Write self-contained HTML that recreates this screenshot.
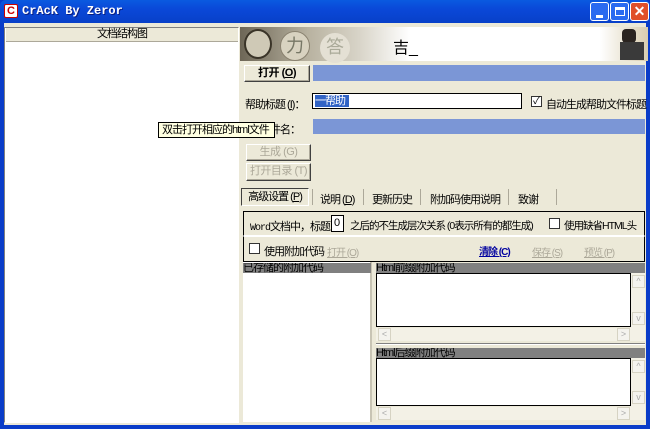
<!DOCTYPE html>
<html><head><meta charset="utf-8"><style>
*{margin:0;padding:0;box-sizing:border-box}
body{width:650px;height:429px;overflow:hidden;background:#0a3cc8;font-family:"Liberation Sans","WenQuanYi Zen Hei","Noto Sans CJK SC",sans-serif;font-size:11px;color:#000;position:relative}
.a{position:absolute;white-space:nowrap}
.t{letter-spacing:-1px}
.btn{position:absolute;background:#ece9d8;border:1px solid;border-color:#fff #404040 #404040 #fff;box-shadow:inset -1px -1px #aca899;text-align:center;line-height:15px;white-space:nowrap;letter-spacing:-0.5px}
.sunk{border:1px solid;border-color:#808080 #fff #fff #808080}
.hdr{position:absolute;background:#808080;color:#000;font-size:11px;line-height:10px;height:10px;white-space:nowrap;overflow:hidden;letter-spacing:-1px}
.cb{position:absolute;width:11px;height:11px;border:1px solid #1c5180;background:#fff}
.sb{position:absolute;background:#f3f1e6}
.arr{position:absolute;width:13px;height:13px;background:#f4f3ee;border:1px solid #d6d3c3;font-size:9px;color:#aaa;text-align:center;line-height:11px}
</style></head><body>
<div class="a" style="left:0;top:0;width:650px;height:23px;background:linear-gradient(#0a5ae0,#0a48d8 40%,#0840c8);border-radius:6px 6px 0 0"></div>
<div class="a" style="left:4px;top:4px;width:14px;height:14px;background:#fff;border:1px solid #c00;border-radius:2px;color:#c00;font-weight:bold;font-size:11px;line-height:12px;text-align:center">C</div>
<div class="a" style="left:22px;top:4px;color:#fff;font-family:'Liberation Mono',monospace;font-weight:bold;font-size:12px;text-shadow:1px 1px #0a1e80">CrAcK By Zeror</div>
<div class="a" style="left:590px;top:2px;width:19px;height:19px;background:#2a6af0;border:1px solid #fff;border-radius:3px"><div class="a" style="left:5px;top:12px;width:7px;height:3px;background:#fff"></div></div>
<div class="a" style="left:610px;top:2px;width:19px;height:19px;background:#2a6af0;border:1px solid #fff;border-radius:3px"><div class="a" style="left:4px;top:4px;width:10px;height:9px;border:1px solid #fff;border-top-width:3px"></div></div>
<div class="a" style="left:630px;top:2px;width:19px;height:19px;background:#e0502a;border:1px solid #fff;border-radius:3px;color:#fff;font-weight:bold;font-size:14px;line-height:16px;text-align:center">✕</div>
<div class="a" style="left:4px;top:23px;width:642px;height:402px;background:#ece9d8"></div>

<div class="a sunk" style="left:4px;top:27px;width:235px;height:396px;background:#fff"></div>
<div class="a t" style="left:6px;top:28px;width:232px;height:14px;background:#ece9d8;border-bottom:1px solid #aca899;text-align:center;line-height:13px">文档结构图</div>

<div class="a" style="left:240px;top:27px;width:408px;height:34px;background:#fff"></div>
<div class="a" style="left:240px;top:27px;width:170px;height:34px;background:linear-gradient(90deg,#6d6656,#b8b2a0 40%,#d8d4c8 70%,#fff)"></div>
<div class="a" style="left:244px;top:29px;width:28px;height:30px;border-radius:50%;background:#cfc9b6;border:2px solid #3a3428"></div>
<div class="a" style="left:280px;top:31px;width:30px;height:30px;border-radius:50%;background:#d8d2c0;border:1px solid #8a8270;color:#776;font-size:18px;text-align:center;line-height:28px">力</div>
<div class="a" style="left:320px;top:33px;width:30px;height:30px;border-radius:50%;background:#e4e0d4;color:#aa9;font-size:18px;text-align:center;line-height:28px">答</div>
<div class="a" style="left:393px;top:34px;font-size:16px">吉_</div>
<div class="a" style="left:600px;top:27px;width:48px;height:34px;background:linear-gradient(90deg,#fff,#d8cdb0)"></div>
<div class="a" style="left:622px;top:29px;width:14px;height:14px;background:#2a2420;border-radius:4px"></div>
<div class="a" style="left:620px;top:42px;width:24px;height:18px;background:#3a3a3a"></div>

<div class="btn" style="left:244px;top:65px;width:66px;height:17px;font-weight:bold">打开 (<u>O</u>)</div>
<div class="a" style="left:313px;top:65px;width:332px;height:16px;background:#7b96d6"></div>

<div class="a t" style="left:245px;top:96px">帮助标题 (<u>I</u>)：</div>
<div class="a" style="left:312px;top:93px;width:210px;height:16px;background:#fff;border:1px solid #000"></div>
<div class="a t" style="left:315px;top:95px;width:34px;height:12px;background:#3163c5;color:#fff;line-height:12px">一帮助</div>
<div class="cb" style="left:531px;top:96px;border-color:#333;font-size:10px;line-height:9px;text-align:center">✓</div>
<div class="a t" style="left:546px;top:96px">自动生成帮助文件标题</div>

<div class="a t" style="left:270px;top:121px">件名：</div>
<div class="a" style="left:313px;top:119px;width:332px;height:15px;background:#7b96d6"></div>
<div class="a t" style="left:158px;top:122px;width:117px;height:16px;background:#ffffe1;border:1px solid #000;line-height:14px;padding-left:3px;overflow:hidden">双击打开相应的html文件</div>

<div class="btn" style="left:246px;top:144px;width:65px;height:17px;color:#aca899">生成 (G)</div>
<div class="btn" style="left:246px;top:163px;width:65px;height:18px;color:#aca899">打开目录 (T)</div>

<div class="a t" style="left:241px;top:188px;width:68px;height:18px;border:1px solid;border-color:#404040 #fff #fff #404040;line-height:16px;text-align:center">高级设置 (<u>P</u>)</div>
<div class="a t" style="left:320px;top:191px">说明 (<u>D</u>)</div>
<div class="a" style="left:312px;top:189px;width:1px;height:16px;background:#aca899"></div>
<div class="a" style="left:363px;top:189px;width:1px;height:16px;background:#aca899"></div>
<div class="a t" style="left:372px;top:191px">更新历史</div>
<div class="a" style="left:420px;top:189px;width:1px;height:16px;background:#aca899"></div>
<div class="a t" style="left:430px;top:191px">附加码使用说明</div>
<div class="a" style="left:508px;top:189px;width:1px;height:16px;background:#aca899"></div>
<div class="a t" style="left:518px;top:191px">致谢</div>
<div class="a" style="left:556px;top:189px;width:1px;height:16px;background:#aca899"></div>

<div class="a" style="left:243px;top:211px;width:402px;height:25px;border:1px solid #000;border-bottom-color:#fff;background:#ece9d8"></div>
<div class="a t" style="left:250px;top:218px"><span style="font-family:'Liberation Mono',monospace;font-size:10px">Word</span>文档中，标题</div>
<div class="a" style="left:331px;top:215px;width:13px;height:17px;border:1px solid #000;background:#fff;line-height:15px;padding-left:2px">0</div>
<div class="a t" style="left:350px;top:218px;font-size:10.5px">之后的不生成层次关系 (0表示所有的都生成)</div>
<div class="cb" style="left:549px;top:218px;border-color:#333"></div>
<div class="a t" style="left:564px;top:218px;font-size:10.5px">使用缺省HTML头</div>

<div class="a" style="left:243px;top:236px;width:402px;height:26px;border:1px solid #000;border-top-color:#fff;background:#ece9d8"></div>
<div class="cb" style="left:249px;top:243px;border-color:#333"></div>
<div class="a t" style="left:264px;top:243px">使用附加代码</div>
<div class="a t" style="left:327px;top:244px;color:#aca899;text-decoration:underline;font-size:10px">打开 (O)</div>
<div class="a t" style="left:479px;top:243px;color:#0000a0;text-decoration:underline;font-weight:bold;font-size:10px">清除 (C)</div>
<div class="a t" style="left:532px;top:244px;color:#aca899;text-decoration:underline;font-size:10px">保存 (S)</div>
<div class="a t" style="left:584px;top:244px;color:#aca899;text-decoration:underline;font-size:10px">预览 (P)</div>

<div class="a" style="left:243px;top:262px;width:129px;height:160px;background:#fff;border-right:2px solid #c8c4b4"></div>
<div class="hdr" style="left:243px;top:263px;width:128px">已存储的附加代码</div>
<div class="hdr" style="left:376px;top:263px;width:269px">Html前缀附加代码</div>
<div class="a" style="left:376px;top:273px;width:255px;height:54px;background:#fff;border:1px solid #000"></div>
<div class="sb" style="left:631px;top:273px;width:14px;height:68px"></div>
<div class="arr" style="left:632px;top:275px">^</div>
<div class="arr" style="left:632px;top:312px">v</div>
<div class="sb" style="left:376px;top:328px;width:255px;height:13px"></div>
<div class="arr" style="left:378px;top:328px">&lt;</div>
<div class="arr" style="left:617px;top:328px">&gt;</div>
<div class="a" style="left:376px;top:343px;width:269px;height:1px;background:#808080"></div>
<div class="a" style="left:376px;top:344px;width:269px;height:1px;background:#fff"></div>
<div class="hdr" style="left:376px;top:348px;width:269px">Html后缀附加代码</div>
<div class="a" style="left:376px;top:358px;width:255px;height:48px;background:#fff;border:1px solid #000"></div>
<div class="sb" style="left:631px;top:358px;width:14px;height:62px"></div>
<div class="arr" style="left:632px;top:360px">^</div>
<div class="arr" style="left:632px;top:391px">v</div>
<div class="sb" style="left:376px;top:407px;width:255px;height:13px"></div>
<div class="arr" style="left:378px;top:407px">&lt;</div>
<div class="arr" style="left:617px;top:407px">&gt;</div>
</body></html>
